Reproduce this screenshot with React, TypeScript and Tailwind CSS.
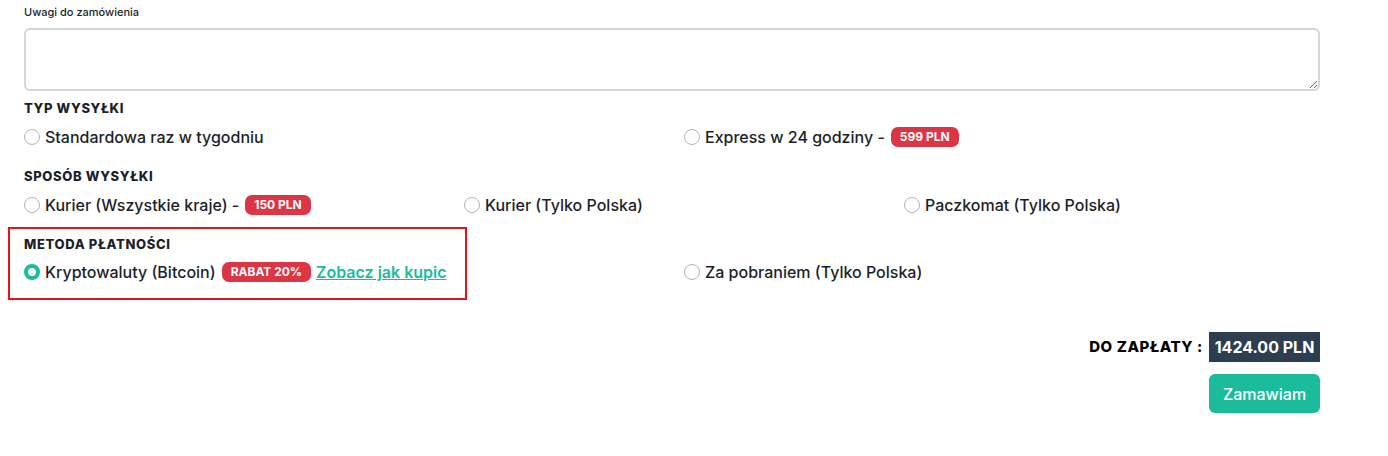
import React from 'react';

function Radio({ checked }: { checked?: boolean }) {
  return checked ? (
    <span className="w-4 h-4 rounded-full border-[4px] border-[#1abc9c] bg-white flex-shrink-0" />
  ) : (
    <span className="w-4 h-4 rounded-full border border-[#b5b5b5] bg-white flex-shrink-0" />
  );
}

function Badge({ children }: { children: React.ReactNode }) {
  return (
    <span className="ml-[1px] inline-flex items-center h-[20px] px-[9px] rounded-[7px] bg-[#dc3545] text-white text-[12px] font-bold leading-none">
      {children}
    </span>
  );
}

function Option({ label, checked, extra }: { label: string; checked?: boolean; extra?: React.ReactNode }) {
  return (
    <label className="flex items-center h-6 gap-[5px] text-[16px] font-medium text-[#1c1f2a]">
      <Radio checked={checked} />
      <span className="whitespace-nowrap">{label}</span>
      {extra}
    </label>
  );
}

function Heading({ children }: { children: React.ReactNode }) {
  return (
    <h3 className="h-5 leading-5 text-[13px] font-extrabold uppercase tracking-[0.05em] text-[#1c1f2a]">{children}</h3>
  );
}

export default function App() {
  return (
    <div className="w-[1388px] h-[456px] bg-white font-['Inter',sans-serif]">
      <div className="w-[1296px] ml-6 pt-1">
        <div className="text-[11px] leading-4 font-medium text-[#1c1f2a] mb-2">Uwagi do zamówienia</div>
        <textarea className="block w-full h-[63px] border-2 border-[#d3d6db] rounded-md resize-y outline-none" />

        {/* Typ wysyłki */}
        <div className="mt-[7px]">
          <Heading>Typ wysyłki</Heading>
          <div className="grid grid-cols-2 gap-x-6 mt-[7px]">
            <Option label="Standardowa raz w tygodniu" />
            <Option label="Express w 24 godziny -" extra={<Badge>599 PLN</Badge>} />
          </div>
        </div>

        {/* Sposób wysyłki */}
        <div className="mt-[17px]">
          <Heading>Sposób wysyłki</Heading>
          <div className="grid grid-cols-3 gap-x-6 mt-[7px]">
            <Option label="Kurier (Wszystkie kraje) -" extra={<Badge>150 PLN</Badge>} />
            <Option label="Kurier (Tylko Polska)" />
            <Option label="Paczkomat (Tylko Polska)" />
          </div>
        </div>

        {/* Metoda płatności */}
        <div className="relative mt-[17px]">
          <div className="absolute -left-4 -top-[7px] w-[459px] h-[73px] border-2 border-[#e8141c] pointer-events-none" />
          <Heading>Metoda płatności</Heading>
          <div className="grid grid-cols-2 gap-x-6 mt-[6px]">
            <Option
              label="Kryptowaluty (Bitcoin)"
              checked
              extra={
                <>
                  <Badge>RABAT 20%</Badge>
                  <a href="#" className="text-[#1abc9c] font-semibold underline whitespace-nowrap">Zobacz jak kupic</a>
                </>
              }
            />
            <Option label="Za pobraniem (Tylko Polska)" />
          </div>
        </div>

        {/* Summary */}
        <div className="mt-[48px] flex flex-col items-end">
          <div className="flex items-center gap-1.5">
            <span className="text-[15px] font-extrabold uppercase text-black tracking-[0.04em]">Do zapłaty :</span>
            <span className="h-[30px] w-[111px] flex items-center justify-center bg-[#2c3e50] text-white text-[16px] font-bold">1424.00 PLN</span>
          </div>
          <button className="mt-3 h-[39px] w-[111px] rounded-md bg-[#1abc9c] text-white text-[16px] font-medium">Zamawiam</button>
        </div>
      </div>
    </div>
  );
}
